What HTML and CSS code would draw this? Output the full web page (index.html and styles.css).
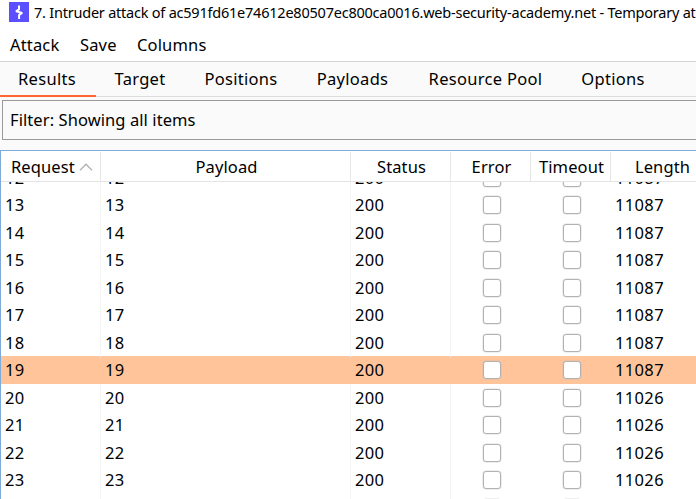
FILE: index.html
```html
<!DOCTYPE html>
<html lang="en">
<head>
<meta charset="utf-8">
<title>Intruder attack</title>
<link rel="stylesheet" href="styles.css">
</head>
<body>
<div class="window">
  <header class="titlebar">
    <svg class="logo" viewBox="0 0 20 20"><rect width="20" height="20" fill="#5b4fff"/><path d="M10 3.4v4L7 9.3l6.2 1.6-3.1 2v4" fill="none" stroke="#fff" stroke-width="2" stroke-linejoin="bevel"/></svg>
    <span class="title">7. Intruder attack of ac591fd61e74612e80507ec800ca0016.web-security-academy.net - Temporary at</span>
  </header>
  <nav class="menu"><span class="m-attack">Attack</span><span class="m-save">Save</span><span class="m-columns">Columns</span></nav>
  <nav class="tabs">
    <span class="tab active">Results</span><span class="tab target">Target</span><span class="tab positions">Positions</span><span class="tab payloads">Payloads</span><span class="tab pool">Resource Pool</span><span class="tab options">Options</span>
  </nav>
  <div class="filter">Filter: Showing all items</div>
  <main class="table">
    <div class="head grid">
      <span class="request">Request<svg class="sort" viewBox="0 0 14 8"><path d="M1 7.2 7 1.3l6 5.9" fill="none" stroke="#b2b2b2" stroke-width="1.4"/></svg></span><span>Payload</span><span>Status</span><span>Error</span><span>Timeout</span><span>Length</span>
    </div>
    <div class="body">
      <div class="rows" id="rows"></div>
    </div>
  </main>
</div>
<script src="rows.js"></script>
</body>
</html>
```
FILE: rows.js
```js
const rows = document.getElementById('rows');
for (let n = 12; n <= 24; n++) {
  const row = document.createElement('div');
  row.className = 'row grid' + (n === 19 ? ' selected' : '');
  const length = n < 20 ? 11087 : 11026;
  row.innerHTML = `<span>${n}</span><span>${n}</span><span>200</span><span class="check"><i></i></span><span class="check"><i></i></span><span>${length}</span>`;
  rows.appendChild(row);
}
```
FILE: styles.css
```css
* { box-sizing: border-box; }
body {
  margin: 0;
  overflow: hidden;
  background: #fff;
  color: #000;
  font-family: "Noto Sans", "Open Sans", sans-serif;
  font-size: 16.5px;
  white-space: nowrap;
}
.window { width: 696px; height: 499px; overflow: hidden; display: flex; flex-direction: column; }
.titlebar { height: 26px; flex: none; display: flex; padding-left: 9px; }
.logo { width: 20px; height: 20px; margin-top: 2px; flex: none; }
.title { margin-left: 5px; font-size: 14.5px; line-height: 25px; letter-spacing: -0.225px; }
.menu { height: 35px; flex: none; display: flex; padding-left: 10px; line-height: 38px; letter-spacing: 0.15px; }
.m-attack { width: 70px; }
.m-save { width: 57px; }
.tabs { height: 36px; flex: none; display: flex; background: #fafafa; border-top: 1px solid #d4d4d4; box-shadow: inset 0 -1px #dcdcdc; line-height: 34px; letter-spacing: 0.3px; }
.tab { height: 35px; flex: none; text-align: center; }
.active { width: 96px; padding-right: 2px; border-bottom: 2px solid #ff6633; }
.target { width: 88px; }
.positions { width: 114px; }
.payloads { width: 109px; }
.pool { width: 157px; }
.options { width: 98px; }
.filter { height: 40px; flex: none; margin: 3px 0 0 2px; padding-left: 7px; border: 1px solid #999; border-right: 0; background: #fafafa; line-height: 38px; letter-spacing: 0.08px; box-shadow: 0 0 0 10px #fafafa; clip-path: inset(-3px 0 -10px -2px); }
.table { flex: 1; min-height: 0; margin-top: 10px; display: flex; flex-direction: column; background: #fff; border-top: 1px solid #7fabda; border-left: 1px solid #7fabda; }
.grid { display: grid; grid-template-columns: 100px 250px 100px 80px 80px 102px; }
.head { height: 31px; flex: none; padding-top: 1px; border-bottom: 1px solid #e4e4e4; line-height: 30px; letter-spacing: 0.1px; }
.head span { text-align: center; border-right: 1px solid #e6e6e6; padding-left: 2px; }
.head .request { display: flex; align-items: center; padding-left: 10px; }
.sort { width: 14px; height: 8px; margin-left: 4px; flex: none; }
.body { flex: 1; min-height: 0; overflow: hidden; }
.rows { margin-top: -18.5px; }
.row { height: 27.5px; line-height: 28px; letter-spacing: 0.35px; }
.row span { padding-left: 4px; border-right: 1px solid #f4f4f4; }
.row .check { border-right: 0; padding-left: 0; display: flex; justify-content: center; align-items: center; }
.check i { width: 18px; height: 18px; margin-left: 1px; border: 1.5px solid #b2b2b2; border-radius: 3px; background: #fff; box-shadow: 0 0 0 0.5px #b2b2b266; }
.selected { background: #ffc499; }
.selected span { border-color: transparent; }
```
